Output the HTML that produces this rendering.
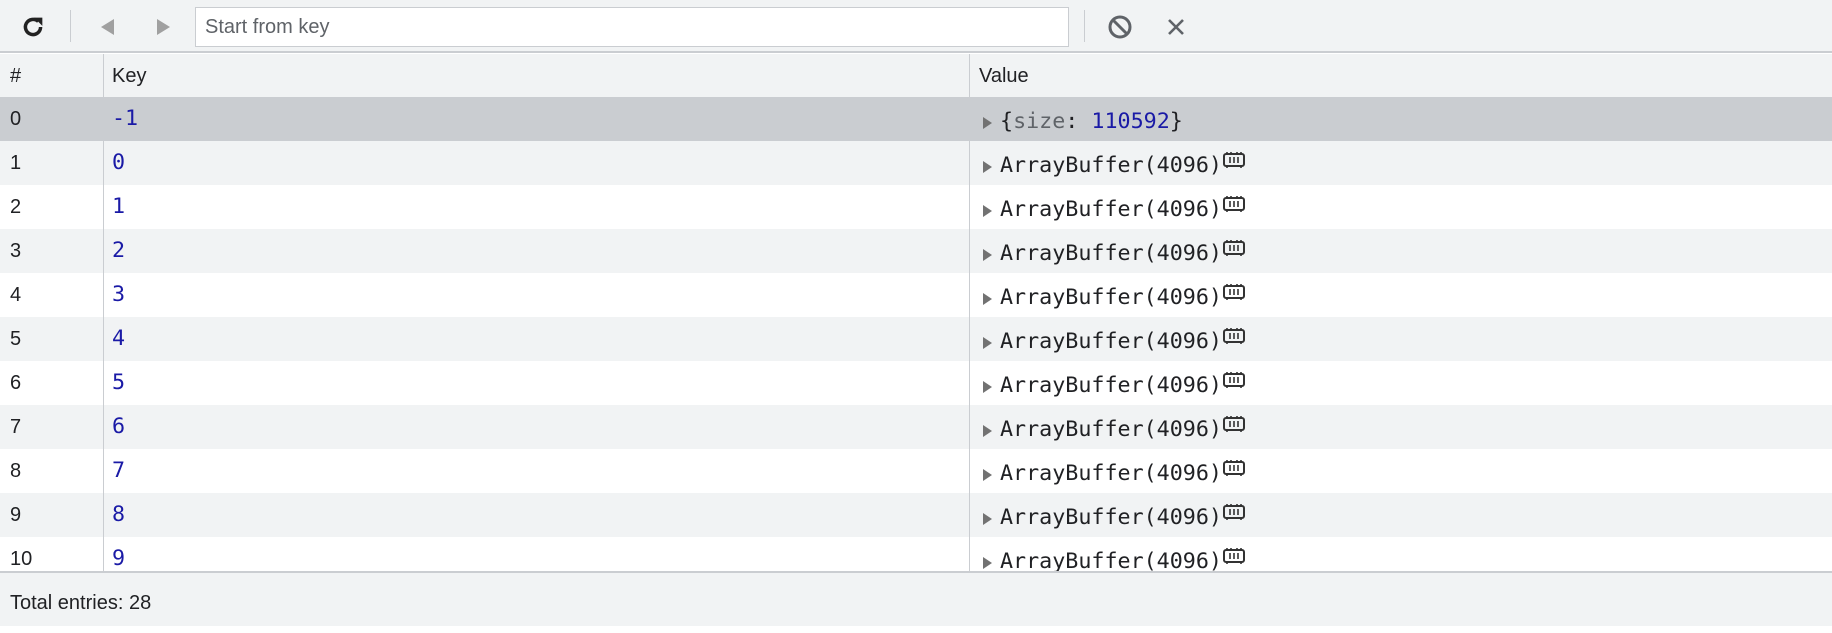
<!DOCTYPE html>
<html><head><style>
*{box-sizing:border-box;margin:0;padding:0}
body{width:1832px;height:626px;overflow:hidden;background:#fff;font-family:"Liberation Sans",Arial,sans-serif;font-size:20px;color:#202124;position:relative}
.tb{position:absolute;left:0;top:0;width:1832px;height:53px;background:#f1f3f4;border-bottom:2px solid #cacdd1}
.sep{position:absolute;top:10px;width:1px;height:32px;background:#cacdd1}
.inp{position:absolute;left:195px;top:7px;width:874px;height:40px;background:#fff;border:1px solid #cacdd1;font-size:20px;line-height:38px;padding-left:9px;color:#5f6368}
.hdr{position:absolute;left:0;top:54px;width:1832px;height:43px;background:#f1f3f4}
.row{position:absolute;left:0;width:1832px;height:44px;line-height:44px}
.c{position:absolute;top:0;white-space:nowrap}
.mono{font-family:"DejaVu Sans Mono","Liberation Mono",monospace;font-size:21.7px;top:3px}
.k{top:0px}
.vl{position:absolute;top:54px;width:1px;height:517px;background:#cacdd1}
.foot{position:absolute;left:0;top:571px;width:1832px;height:55px;background:#f1f3f4;border-top:2px solid #cacdd1;line-height:60px;padding-left:10px}
.tri{display:inline-block;width:0;height:0;border-top:6px solid transparent;border-bottom:6px solid transparent;border-left:9px solid #727272;margin-right:8px;vertical-align:-1px}
.blu{color:#1a1aa6}
</style></head><body>
<div class="tb">
<svg style="position:absolute;left:19px;top:13px" width="28" height="28" viewBox="0 0 24 24"><path d="M18.5 12a6.5 6.5 0 1 1-2-4.7" fill="none" stroke="#222" stroke-width="3"/><path d="M13 4h7v7z" fill="#222"/></svg>
<div class="sep" style="left:70px"></div>
<svg style="position:absolute;left:98px;top:17px" width="18" height="20"><path d="M16 2 L3 10 L16 18Z" fill="#a0a0a0"/></svg>
<svg style="position:absolute;left:155px;top:17px" width="18" height="20"><path d="M2 2 L15 10 L2 18Z" fill="#a0a0a0"/></svg>
<div class="inp">Start from key</div>
<div class="sep" style="left:1084px"></div>
<svg style="position:absolute;left:1107px;top:14px" width="26" height="26" viewBox="0 0 26 26"><circle cx="13" cy="13" r="10" fill="none" stroke="#5f6368" stroke-width="3"/><path d="M6 6 L20 20" stroke="#5f6368" stroke-width="3"/></svg>
<svg style="position:absolute;left:1166px;top:17px" width="20" height="20"><path d="M3 3 L17 17 M17 3 L3 17" stroke="#5f6368" stroke-width="2.6"/></svg>
</div>
<div class="hdr">
<div class="c" style="left:10px;line-height:44px">#</div>
<div class="c" style="left:112px;line-height:44px">Key</div>
<div class="c" style="left:979px;line-height:44px">Value</div>
</div>
<div class="row" style="top:97px;background:#cacdd1"><div class="c" style="left:10px">0</div><div class="c mono k blu" style="left:112px">-1</div><div class="c mono" style="left:983px"><span class="tri"></span>{<span style="color:#5f6368">size</span>: <span class="blu">110592</span>}</div></div>
<div class="row" style="top:141px;background:#f1f3f4"><div class="c" style="left:10px">1</div><div class="c mono k blu" style="left:112px">0</div><div class="c mono" style="left:983px"><span class="tri"></span>ArrayBuffer(4096)<svg width="24" height="20" style="vertical-align:2px" viewBox="0 0 24 20"><rect x="2" y="4" width="20" height="12" rx="2" fill="none" stroke="#333" stroke-width="2"/><path d="M8 7v6M12 7v6M16 7v6M5 2v2M9 2v2M15 2v2M19 2v2M5 16v2M19 16v2" stroke="#333" stroke-width="1.6"/></svg></div></div>
<div class="row" style="top:185px"><div class="c" style="left:10px">2</div><div class="c mono k blu" style="left:112px">1</div><div class="c mono" style="left:983px"><span class="tri"></span>ArrayBuffer(4096)<svg width="24" height="20" style="vertical-align:2px" viewBox="0 0 24 20"><rect x="2" y="4" width="20" height="12" rx="2" fill="none" stroke="#333" stroke-width="2"/><path d="M8 7v6M12 7v6M16 7v6M5 2v2M9 2v2M15 2v2M19 2v2M5 16v2M19 16v2" stroke="#333" stroke-width="1.6"/></svg></div></div>
<div class="row" style="top:229px;background:#f1f3f4"><div class="c" style="left:10px">3</div><div class="c mono k blu" style="left:112px">2</div><div class="c mono" style="left:983px"><span class="tri"></span>ArrayBuffer(4096)<svg width="24" height="20" style="vertical-align:2px" viewBox="0 0 24 20"><rect x="2" y="4" width="20" height="12" rx="2" fill="none" stroke="#333" stroke-width="2"/><path d="M8 7v6M12 7v6M16 7v6M5 2v2M9 2v2M15 2v2M19 2v2M5 16v2M19 16v2" stroke="#333" stroke-width="1.6"/></svg></div></div>
<div class="row" style="top:273px"><div class="c" style="left:10px">4</div><div class="c mono k blu" style="left:112px">3</div><div class="c mono" style="left:983px"><span class="tri"></span>ArrayBuffer(4096)<svg width="24" height="20" style="vertical-align:2px" viewBox="0 0 24 20"><rect x="2" y="4" width="20" height="12" rx="2" fill="none" stroke="#333" stroke-width="2"/><path d="M8 7v6M12 7v6M16 7v6M5 2v2M9 2v2M15 2v2M19 2v2M5 16v2M19 16v2" stroke="#333" stroke-width="1.6"/></svg></div></div>
<div class="row" style="top:317px;background:#f1f3f4"><div class="c" style="left:10px">5</div><div class="c mono k blu" style="left:112px">4</div><div class="c mono" style="left:983px"><span class="tri"></span>ArrayBuffer(4096)<svg width="24" height="20" style="vertical-align:2px" viewBox="0 0 24 20"><rect x="2" y="4" width="20" height="12" rx="2" fill="none" stroke="#333" stroke-width="2"/><path d="M8 7v6M12 7v6M16 7v6M5 2v2M9 2v2M15 2v2M19 2v2M5 16v2M19 16v2" stroke="#333" stroke-width="1.6"/></svg></div></div>
<div class="row" style="top:361px"><div class="c" style="left:10px">6</div><div class="c mono k blu" style="left:112px">5</div><div class="c mono" style="left:983px"><span class="tri"></span>ArrayBuffer(4096)<svg width="24" height="20" style="vertical-align:2px" viewBox="0 0 24 20"><rect x="2" y="4" width="20" height="12" rx="2" fill="none" stroke="#333" stroke-width="2"/><path d="M8 7v6M12 7v6M16 7v6M5 2v2M9 2v2M15 2v2M19 2v2M5 16v2M19 16v2" stroke="#333" stroke-width="1.6"/></svg></div></div>
<div class="row" style="top:405px;background:#f1f3f4"><div class="c" style="left:10px">7</div><div class="c mono k blu" style="left:112px">6</div><div class="c mono" style="left:983px"><span class="tri"></span>ArrayBuffer(4096)<svg width="24" height="20" style="vertical-align:2px" viewBox="0 0 24 20"><rect x="2" y="4" width="20" height="12" rx="2" fill="none" stroke="#333" stroke-width="2"/><path d="M8 7v6M12 7v6M16 7v6M5 2v2M9 2v2M15 2v2M19 2v2M5 16v2M19 16v2" stroke="#333" stroke-width="1.6"/></svg></div></div>
<div class="row" style="top:449px"><div class="c" style="left:10px">8</div><div class="c mono k blu" style="left:112px">7</div><div class="c mono" style="left:983px"><span class="tri"></span>ArrayBuffer(4096)<svg width="24" height="20" style="vertical-align:2px" viewBox="0 0 24 20"><rect x="2" y="4" width="20" height="12" rx="2" fill="none" stroke="#333" stroke-width="2"/><path d="M8 7v6M12 7v6M16 7v6M5 2v2M9 2v2M15 2v2M19 2v2M5 16v2M19 16v2" stroke="#333" stroke-width="1.6"/></svg></div></div>
<div class="row" style="top:493px;background:#f1f3f4"><div class="c" style="left:10px">9</div><div class="c mono k blu" style="left:112px">8</div><div class="c mono" style="left:983px"><span class="tri"></span>ArrayBuffer(4096)<svg width="24" height="20" style="vertical-align:2px" viewBox="0 0 24 20"><rect x="2" y="4" width="20" height="12" rx="2" fill="none" stroke="#333" stroke-width="2"/><path d="M8 7v6M12 7v6M16 7v6M5 2v2M9 2v2M15 2v2M19 2v2M5 16v2M19 16v2" stroke="#333" stroke-width="1.6"/></svg></div></div>
<div class="row" style="top:537px"><div class="c" style="left:10px">10</div><div class="c mono k blu" style="left:112px">9</div><div class="c mono" style="left:983px"><span class="tri"></span>ArrayBuffer(4096)<svg width="24" height="20" style="vertical-align:2px" viewBox="0 0 24 20"><rect x="2" y="4" width="20" height="12" rx="2" fill="none" stroke="#333" stroke-width="2"/><path d="M8 7v6M12 7v6M16 7v6M5 2v2M9 2v2M15 2v2M19 2v2M5 16v2M19 16v2" stroke="#333" stroke-width="1.6"/></svg></div></div>
<div class="vl" style="left:103px"></div>
<div class="vl" style="left:969px"></div>
<div class="foot">Total entries: 28</div>
</body></html>
